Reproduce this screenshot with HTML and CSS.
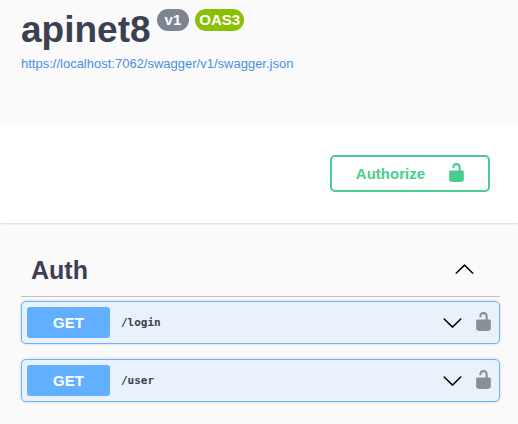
FILE: index.html
```
<!DOCTYPE html>
<html lang="en">
<head>
    <meta charset="utf-8">
    <meta name="viewport" content="width=device-width, initial-scale=1">
    <title>apinet8</title>
    <link rel="stylesheet" href="styles.css">
</head>
<body>
    <!-- shared icons -->
    <svg class="icon-defs" aria-hidden="true">
        <symbol id="unlocked" viewBox="0 0 20 20">
            <path d="M15.8 8H14V5.6C14 2.703 12.665 1 10 1 7.334 1 6 2.703 6 5.6V6h2v-.801C8 3.754 8.797 3 10 3c1.203 0 2 .754 2 2.199V8H4c-.553 0-1 .646-1 1.199V17c0 .549.428 1.139.951 1.307l1.197.387C5.672 18.861 6.55 19 7.1 19h5.8c.549 0 1.428-.139 1.951-.307l1.196-.387c.524-.167.953-.757.953-1.306V9.199C17 8.646 16.352 8 15.8 8z"/>
        </symbol>
        <symbol id="arrow-down" viewBox="0 0 20 20">
            <path d="M17.418 6.109c.272-.268.709-.268.979 0s.271.701 0 .969l-7.908 7.83c-.27.268-.707.268-.979 0l-7.908-7.83c-.27-.268-.27-.701 0-.969.271-.268.709-.268.979 0L10 13.25l7.418-7.141z"/>
        </symbol>
        <symbol id="arrow-up" viewBox="0 0 20 20">
            <path d="M17.418 14.908c.272.27.709.27.979 0s.271-.701 0-.969l-7.908-7.83c-.27-.268-.707-.268-.979 0l-7.908 7.83c-.27.268-.27.701 0 .969.271.27.709.27.979 0L10 7.767l7.418 7.141z"/>
        </symbol>
    </svg>

    <header class="info">
        <h1 class="title">
            apinet8
            <span class="badge">v1</span>
            <span class="badge badge-oas">OAS3</span>
        </h1>
        <a class="spec-link" href="https://localhost:7062/swagger/v1/swagger.json">https://localhost:7062/swagger/v1/swagger.json</a>
    </header>

    <section class="schemes">
        <button class="authorize" type="button">
            <span>Authorize</span>
            <svg class="icon"><use href="#unlocked"/></svg>
        </button>
    </section>

    <main class="operations">
        <div class="tag-header">
            <h2 class="tag-name">Auth</h2>
            <button class="icon-btn" type="button" aria-label="Collapse operation">
                <svg class="icon"><use href="#arrow-up"/></svg>
            </button>
        </div>

        <div class="opblock">
            <button class="summary" type="button">
                <span class="method">GET</span>
                <span class="path">/login</span>
                <svg class="icon"><use href="#arrow-down"/></svg>
            </button>
            <button class="icon-btn lock" type="button" aria-label="Authorization for /login">
                <svg class="icon"><use href="#unlocked"/></svg>
            </button>
        </div>

        <div class="opblock">
            <button class="summary" type="button">
                <span class="method">GET</span>
                <span class="path">/user</span>
                <svg class="icon"><use href="#arrow-down"/></svg>
            </button>
            <button class="icon-btn lock" type="button" aria-label="Authorization for /user">
                <svg class="icon"><use href="#unlocked"/></svg>
            </button>
        </div>
    </main>
</body>
</html>
```

FILE: styles.css
```
* {
    box-sizing: border-box;
}

body {
    margin: 0;
    background: #fafafa;
    color: #3b4151;
    font-family: "Liberation Sans", Arial, sans-serif;
}

button {
    margin: 0;
    padding: 0;
    border: 0;
    background: none;
    color: inherit;
    font-family: inherit;
    cursor: pointer;
}

.icon-defs {
    display: none;
}

.icon {
    display: block;
    flex: none;
    width: 21px;
    height: 21px;
    fill: currentColor;
}

.info {
    padding: 9px 18px 52px 21px;
}

.title {
    display: flex;
    align-items: flex-start;
    gap: 6px;
    margin: 0;
    font-size: 37px;
    line-height: 42px;
}

.badge {
    padding: 0 8px;
    border-radius: 11px;
    background: #7d8492;
    color: #fff;
    font-size: 15px;
    line-height: 22px;
}

.badge-oas {
    padding: 0 4px;
    background: #89bf04;
}

.spec-link {
    display: block;
    margin-top: 4px;
    color: #4990e2;
    font-size: 13px;
    line-height: 17px;
    text-decoration: none;
}

.schemes {
    display: flex;
    justify-content: flex-end;
    padding: 31px 28px;
    background: #fff;
    box-shadow: 0 1px 2px rgba(0, 0, 0, 0.15);
}

.authorize {
    display: flex;
    align-items: center;
    gap: 21px;
    height: 37px;
    padding: 0 21px 0 24px;
    border: 2px solid #49cc90;
    border-radius: 5px;
    color: #49cc90;
    font-size: 15px;
    font-weight: bold;
}

.authorize .icon,
.icon-btn {
    padding-bottom: 3px;
}

.authorize .icon {
    height: 24px;
}

.operations {
    padding: 21px 18px 21px 21px;
}

.tag-header {
    display: flex;
    align-items: center;
    justify-content: space-between;
    margin-bottom: 4px;
    padding: 10px 25px 10px 10px;
    border-bottom: 1px solid rgba(59, 65, 81, 0.3);
}

.tag-name {
    margin: 0;
    font-size: 25px;
    line-height: 32px;
}

.icon-btn {
    color: #000;
}

.opblock {
    display: flex;
    align-items: center;
    gap: 10px;
    margin-bottom: 15px;
    padding: 5px;
    border: 1px solid #6fb3fa;
    border-radius: 5px;
    background: #e9f2fa;
    box-shadow: 0 0 3px rgba(0, 0, 0, 0.19);
}

.summary {
    display: flex;
    flex: 1;
    align-items: center;
    color: #000;
}

.method {
    width: 83px;
    border-radius: 3px;
    background: #61affe;
    color: #fff;
    font-size: 15px;
    font-weight: bold;
    line-height: 31px;
    text-align: center;
}

.path {
    flex: 1;
    padding: 0 11px;
    color: #3b4151;
    font-family: "DejaVu Sans Mono", monospace;
    font-size: 11px;
    font-weight: bold;
    text-align: left;
}

.lock {
    color: #8b8e92;
}
```
